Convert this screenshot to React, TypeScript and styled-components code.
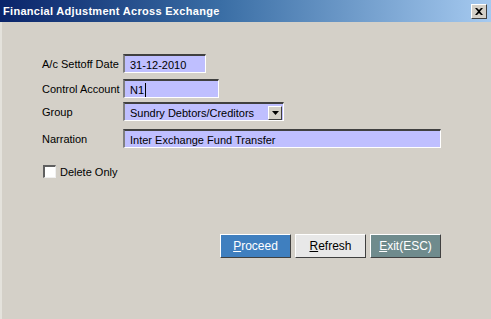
import React from 'react';
import styled, { createGlobalStyle } from 'styled-components';

const GlobalStyle = createGlobalStyle`
  html, body {
    margin: 0;
    padding: 0;
    background: #d4d0c8;
  }
  body {
    font-family: "Liberation Sans", Arial, sans-serif;
    font-size: 11px;
    color: #000;
  }
`;

const Window = styled.div`
  width: 491px;
  height: 319px;
  background: #d4d0c8;
  border-left: 2px solid #e4e2dc;
  box-sizing: border-box;
  display: flex;
  flex-direction: column;
`;

const TitleBar = styled.div`
  height: 22px;
  margin-left: -2px;
  background: linear-gradient(to right, #0a246a 0%, #3a6ea5 45%, #a6caf0 100%);
  display: flex;
  align-items: center;
  justify-content: space-between;
  padding: 0 3px 0 3px;
`;

const Title = styled.span`
  color: #fff;
  font-family: "Liberation Sans", Tahoma, sans-serif;
  font-weight: bold;
  font-size: 11px;
  letter-spacing: 0.3px;
`;

const CloseButton = styled.div`
  width: 14px;
  height: 13px;
  background: #d4d0c8;
  border-top: 1px solid #fff;
  border-left: 1px solid #fff;
  border-right: 1px solid #404040;
  border-bottom: 1px solid #404040;
  display: flex;
  align-items: center;
  justify-content: center;
  margin-right: 1px;
`;

const Body = styled.div`
  flex: 1;
  padding: 32px 0 0 40px;
  display: flex;
  flex-direction: column;
`;

const Row = styled.div<{ $gap: number }>`
  display: flex;
  align-items: center;
  margin-top: ${p => p.$gap}px;
`;

const Label = styled.label`
  width: 81px;
  flex: none;
  white-space: nowrap;
`;

const Field = styled.div<{ $width: number }>`
  width: ${p => p.$width}px;
  height: 19px;
  box-sizing: border-box;
  background: #bfbfff;
  border-top: 2px solid #404040;
  border-left: 2px solid #808080;
  border-right: 1px solid #fff;
  border-bottom: 1px solid #fff;
  padding: 1px 4px 0 5px;
  display: flex;
  align-items: center;
  white-space: nowrap;
`;

const Caret = styled.span`
  display: inline-block;
  width: 1px;
  height: 14px;
  background: #000;
  margin-left: 1px;
`;

const Select = styled(Field)`
  justify-content: space-between;
  padding-right: 1px;
`;

const DropButton = styled.div`
  width: 14px;
  height: 14px;
  background: #d4d0c8;
  border-top: 1px solid #fff;
  border-left: 1px solid #fff;
  border-right: 1px solid #404040;
  border-bottom: 1px solid #404040;
  display: flex;
  align-items: center;
  justify-content: center;
  box-sizing: border-box;
`;

const CheckRow = styled.div`
  display: flex;
  align-items: center;
  margin-top: 17px;
  margin-left: 1px;
  gap: 4px;
`;

const CheckBox = styled.span`
  width: 13px;
  height: 13px;
  box-sizing: border-box;
  background: #fff;
  border-top: 2px solid #606060;
  border-left: 2px solid #606060;
  border-right: 1px solid #f0f0f0;
  border-bottom: 1px solid #f0f0f0;
`;

const Buttons = styled.div`
  display: flex;
  gap: 4px;
  margin-top: 56px;
  margin-left: 178px;
`;

const Button = styled.button<{ $tone: 'blue' | 'light' | 'grey' }>`
  width: 71px;
  height: 24px;
  box-sizing: border-box;
  font-family: "Liberation Sans", Arial, sans-serif;
  font-size: 12px;
  padding: 0;
  cursor: default;
  color: ${p => (p.$tone === 'light' ? '#000' : '#fff')};
  background: ${p => (p.$tone === 'blue' ? '#3f7fbf' : p.$tone === 'light' ? '#e8e8e8' : '#6f8b8d')};
  border-top: 1px solid #fff;
  border-left: 1px solid #fff;
  border-right: 1px solid #404040;
  border-bottom: 1px solid #404040;
  u {
    text-decoration: underline;
  }
`;

export default function App() {
  return (
    <>
      <GlobalStyle />
      <Window>
        <TitleBar>
          <Title>Financial Adjustment Across Exchange</Title>
          <CloseButton>
            <svg width="8" height="7" viewBox="0 0 8 7">
              <path d="M0 0 L2 0 L4 2 L6 0 L8 0 L5 3.5 L8 7 L6 7 L4 5 L2 7 L0 7 L3 3.5 Z" fill="#000" />
            </svg>
          </CloseButton>
        </TitleBar>
        <Body>
          <Row $gap={0}>
            <Label>A/c Settoff Date</Label>
            <Field $width={83}>31-12-2010</Field>
          </Row>
          <Row $gap={6}>
            <Label>Control Account</Label>
            <Field $width={96}>N1<Caret /></Field>
          </Row>
          <Row $gap={4}>
            <Label>Group</Label>
            <Select $width={161}>
              Sundry Debtors/Creditors
              <DropButton>
                <svg width="7" height="4" viewBox="0 0 7 4">
                  <path d="M0 0 H7 L3.5 4 Z" fill="#000" />
                </svg>
              </DropButton>
            </Select>
          </Row>
          <Row $gap={8}>
            <Label>Narration</Label>
            <Field $width={318}>Inter Exchange Fund Transfer</Field>
          </Row>
          <CheckRow>
            <CheckBox />
            <span>Delete Only</span>
          </CheckRow>
          <Buttons>
            <Button $tone="blue"><u>P</u>roceed</Button>
            <Button $tone="light"><u>R</u>efresh</Button>
            <Button $tone="grey"><u>E</u>xit(ESC)</Button>
          </Buttons>
        </Body>
      </Window>
    </>
  );
}
